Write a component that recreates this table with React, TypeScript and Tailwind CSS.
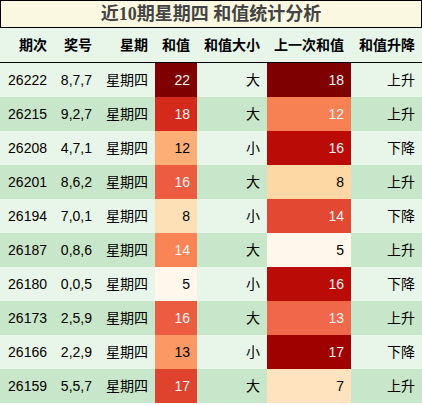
import React from "react";

type Row = {
  q: string;
  n: string;
  s: number;
  s2: string;
  sc: string;
  sw: boolean;
  big: string;
  p: number;
  pc: string;
  pw: boolean;
  t: string;
};

const rows: Row[] = [
  { q: "26222", n: "8,7,7", s: 22, s2: "", sc: "#7f0000", sw: true, big: "大", p: 18, pc: "#7f0000", pw: true, t: "上升" },
  { q: "26215", n: "9,2,7", s: 18, s2: "", sc: "#d32a1b", sw: true, big: "大", p: 12, pc: "#f88154", pw: true, t: "上升" },
  { q: "26208", n: "4,7,1", s: 12, s2: "", sc: "#fdae77", sw: false, big: "小", p: 16, pc: "#bb0b07", pw: true, t: "下降" },
  { q: "26201", n: "8,6,2", s: 16, s2: "", sc: "#eb5c41", sw: true, big: "大", p: 8, pc: "#fdd7a4", pw: false, t: "上升" },
  { q: "26194", n: "7,0,1", s: 8, s2: "", sc: "#fee0b7", sw: false, big: "小", p: 14, pc: "#e24832", pw: true, t: "下降" },
  { q: "26187", n: "0,8,6", s: 14, s2: "", sc: "#f98455", sw: true, big: "大", p: 5, pc: "#fff7ec", pw: false, t: "上升" },
  { q: "26180", n: "0,0,5", s: 5, s2: "", sc: "#fff7ec", sw: false, big: "小", p: 16, pc: "#bb0b07", pw: true, t: "下降" },
  { q: "26173", n: "2,5,9", s: 16, s2: "", sc: "#eb5c41", sw: true, big: "大", p: 13, pc: "#f06849", pw: true, t: "上升" },
  { q: "26166", n: "2,2,9", s: 13, s2: "", sc: "#fc9863", sw: false, big: "小", p: 17, pc: "#9f0000", pw: true, t: "下降" },
  { q: "26159", n: "5,5,7", s: 17, s2: "", sc: "#df432d", sw: true, big: "大", p: 7, pc: "#fee3be", pw: false, t: "上升" },
];

const headers = ["期次", "奖号", "星期", "和值", "和值大小", "上一次和值", "和值升降"];

const font = { fontFamily: '"Liberation Sans", "Noto Sans CJK SC", sans-serif' };

export default function App() {
  return (
    <div className="w-[422px] bg-white" style={font}>
      <div
        className="h-[28px] border border-black bg-[#fbf8e1] flex items-center justify-center text-[18px] font-bold text-[#444]"
        style={{ fontFamily: '"Liberation Serif", "Noto Sans CJK SC", serif' }}
      >
        近10期星期四 和值统计分析
      </div>
      <div className="grid grid-cols-[54px_45px_56px_42px_70px_84px_71px] h-[35px] bg-[#e8f5e9] border-b border-black text-[14px] font-bold text-black">
        {headers.map((h) => (
          <div key={h} className="flex items-center justify-end pr-[7px] whitespace-nowrap">
            {h}
          </div>
        ))}
      </div>
      {rows.map((r, i) => (
        <div
          key={r.q}
          className={`grid grid-cols-[54px_45px_56px_42px_70px_84px_71px] h-[34px] text-[14px] text-black ${
            i % 2 === 0 ? "bg-[#e8f5e9]" : "bg-[#c8e6c9]"
          }`}
        >
          <div className="flex items-center justify-end pr-[7px]">{r.q}</div>
          <div className="flex items-center justify-end pr-[7px]">{r.n}</div>
          <div className="flex items-center justify-end pr-[7px]">星期四</div>
          <div
            className={`flex items-center justify-end pr-[7px] ${r.sw ? "text-[#f5f5f5]" : "text-black"}`}
            style={{ backgroundColor: r.sc }}
          >
            {r.s}
          </div>
          <div className="flex items-center justify-end pr-[7px]">{r.big}</div>
          <div
            className={`flex items-center justify-end pr-[7px] ${r.pw ? "text-[#f5f5f5]" : "text-black"}`}
            style={{ backgroundColor: r.pc }}
          >
            {r.p}
          </div>
          <div className="flex items-center justify-end pr-[7px]">{r.t}</div>
        </div>
      ))}
    </div>
  );
}
